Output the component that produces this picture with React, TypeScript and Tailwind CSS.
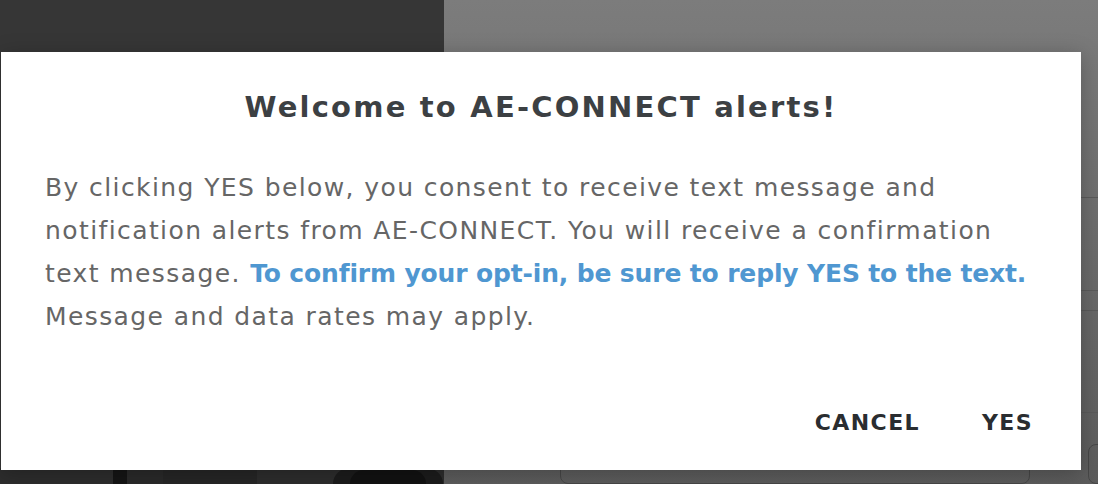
const App = () => {
	return (
		<div className="relative w-[1098px] h-[484px] overflow-hidden" style={{ fontFamily: '"DejaVu Sans", sans-serif' }}>
			{/* page behind the dialog */}
			<div className="flex h-full">
				<div className="w-[444px] shrink-0 h-full bg-[#363636] flex flex-col justify-end">
					<div className="flex h-[16px] items-stretch bg-[#2d2d2d]">
						<div className="w-[113px]"></div>
						<div className="w-[14px] bg-[#151515]"></div>
						<div className="w-[36px] bg-[#2a2a2a]"></div>
						<div className="w-[94px] bg-[#262626]"></div>
						<div className="w-[76px]"></div>
						<div className="w-[110px] rounded-t-full bg-[#1c1c1c] flex justify-center items-end">
							<div className="w-[76px] h-[14px] rounded-t-full bg-[#121212]"></div>
						</div>
					</div>
				</div>
				<div className="flex-1 min-w-0 h-full bg-gradient-to-b from-[#7c7c7c] to-[#5c5c5c] flex flex-col pl-[116px]">
					<div className="h-[210px] border-b border-[#5a5a5a]"></div>
					<div className="h-[99px] border-b border-[#5a5a5a]"></div>
					<div className="h-[22px] border-b border-[#5a5a5a]"></div>
					<div className="h-[108px] border-b border-[#5a5a5a]"></div>
					<div className="flex gap-[58px] pt-[31px]">
						<div className="relative w-[470px] shrink-0 h-[40px] rounded-[8px] border border-[#474747]">
							<span className="absolute left-[24px] -top-[6px] text-[17px] leading-none text-[#1e1e1e]">City</span>
						</div>
						<div className="w-[40px] shrink-0 h-[40px] rounded-[8px] border border-[#474747]"></div>
					</div>
				</div>
			</div>

			{/* dialog */}
			<div className="absolute left-[1px] top-[52px] w-[1080px] h-[418px] bg-white flex flex-col shadow-[0_4px_20px_rgba(0,0,0,0.25)]">
				<h2 className="text-center text-[29px] font-semibold text-[#3c4043] mt-[35px] leading-[40px] tracking-[2.2px]">
					Welcome to AE-CONNECT alerts!
				</h2>
				<p className="mt-[39px] pl-[44px] pr-[20px] text-[25px] leading-[43px] text-[#666666] tracking-[1.4px] whitespace-nowrap">
					By clicking YES below, you consent to receive text message and
					<br />
					notification alerts from AE-CONNECT. You will receive a confirmation
					<br />
					text message.{' '}
					<span className="font-bold text-[#4f97d1] tracking-[-0.15px]">To confirm your opt-in, be sure to reply YES to the text.</span>
					<br />
					Message and data rates may apply.
				</p>
				<div className="mt-auto mb-[31px] flex justify-end gap-[62px] pr-[48px]">
					<button className="text-[22px] font-semibold tracking-[1.4px] text-[#2a2d30]">CANCEL</button>
					<button className="text-[22px] font-semibold tracking-[1.4px] text-[#2a2d30]">YES</button>
				</div>
			</div>
		</div>
	);
};

export default App;
